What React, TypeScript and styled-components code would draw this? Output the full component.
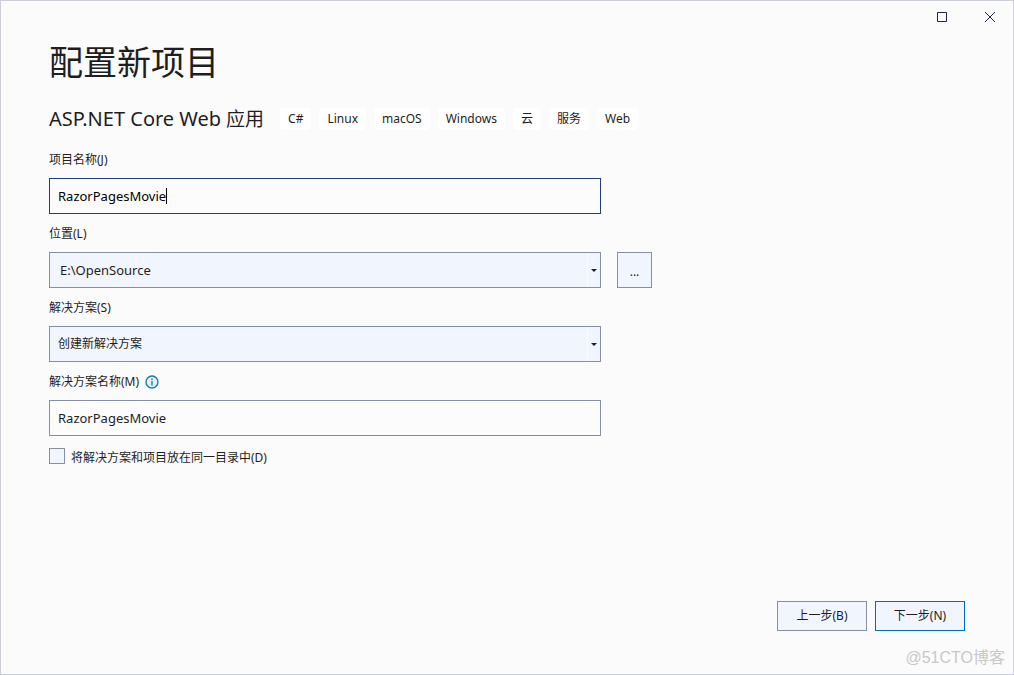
import React from "react";
import styled, { createGlobalStyle } from "styled-components";

const GlobalStyle = createGlobalStyle`
  *, *::before, *::after { box-sizing: border-box; }
  body {
    margin: 0;
    background: #fbfbfb;
    color: #1e1e1e;
    font: 12px/16px "Noto Sans", "Noto Sans CJK SC", sans-serif;
  }
`;

const Window = styled.div`
  position: relative;
  display: flex;
  flex-direction: column;
  min-height: 100vh;
  outline: 1px solid #cccedb;
  outline-offset: -1px;
`;

const TitleBar = styled.header`
  display: flex;
  justify-content: flex-end;
  padding-top: 1px;
`;

const CaptionButton = styled.button`
  display: flex;
  align-items: center;
  justify-content: center;
  width: 48px;
  height: 32px;
  padding: 0;
  border: 0;
  background: transparent;
  color: #1b293e;
`;

const Content = styled.main`
  flex: 1;
  padding: 4px 49px 0;
`;

const Title = styled.h1`
  margin: 0;
  font-size: 34px;
  font-weight: 400;
  line-height: 50px;
`;

const Template = styled.div`
  display: flex;
  align-items: center;
  flex-wrap: wrap;
  gap: 16px;
  margin-top: 16px;
`;

const TemplateName = styled.h2`
  margin: 0;
  font-size: 19px;
  font-weight: 400;
  line-height: 32px;
`;

const Latin = styled.span`
  font-size: 20px;
`;

const Tags = styled.ul`
  display: flex;
  flex-wrap: wrap;
  gap: 8px;
  margin: 0;
  padding: 0;
  list-style: none;
`;

const Tag = styled.li`
  padding: 3px 8px;
  border-radius: 4px;
  background: #ffffff;
`;

const Form = styled.form`
  display: flex;
  flex-direction: column;
  gap: 12px;
  margin-top: 17px;
`;

const Field = styled.div`
  display: flex;
  flex-direction: column;
  gap: 10px;
`;

const LabelRow = styled.div`
  display: flex;
  align-items: center;
  gap: 6px;
`;

const FieldRow = styled.div`
  display: flex;
  gap: 16px;
`;

const Control = styled.div`
  position: relative;
  flex: 0 1 552px;
  min-width: 0;
`;

const TextInput = styled.input<{ $active?: boolean }>`
  display: block;
  width: 100%;
  height: 36px;
  padding: 0 8px;
  border: 1px solid ${(p) => (p.$active ? "#1f3d7a" : "#868fa6")};
  border-radius: 0;
  outline: 0;
  background: #fcfcfc;
  color: ${(p) => (p.$active ? "#000000" : "#1e1e1e")};
  font: inherit;
  font-size: 13px;
`;

const Caret = styled.span`
  position: absolute;
  top: 10px;
  left: 9px;
  border-right: 1px solid #000000;
  color: transparent;
  font-size: 13px;
  pointer-events: none;
`;

const Select = styled.select<{ $latin?: boolean }>`
  display: block;
  appearance: none;
  width: 100%;
  height: 36px;
  padding: 0 24px 0 ${(p) => (p.$latin ? "10px" : "8px")};
  border: 1px solid #868fa6;
  border-radius: 0;
  background: #f1f5fe;
  color: #1e1e1e;
  font: inherit;
  font-size: ${(p) => (p.$latin ? "13px" : "12px")};
`;

const DropMark = styled.span`
  position: absolute;
  top: 1px;
  right: 1px;
  bottom: 1px;
  display: flex;
  align-items: center;
  justify-content: center;
  width: 13px;
  border-left: 1px solid #fcfcfc;
  pointer-events: none;
`;

const Button = styled.button<{ $primary?: boolean }>`
  width: 90px;
  height: 30px;
  padding: 0;
  border: 1px solid ${(p) => (p.$primary ? "#006cbe" : "#868fa6")};
  border-radius: 0;
  background: #f1f5fe;
  color: #1e1e1e;
  font: inherit;
`;

const BrowseButton = styled(Button)`
  width: 35px;
  height: 36px;
  padding-top: 4px;
`;

const CheckRow = styled.label`
  display: flex;
  align-items: flex-start;
  align-self: flex-start;
  gap: 6px;
  line-height: 20px;
`;

const CheckBox = styled.input`
  appearance: none;
  width: 16px;
  height: 16px;
  margin: 0;
  border: 1px solid #868fa6;
  background: #f1f5fe;
`;

const Footer = styled.footer`
  display: flex;
  justify-content: flex-end;
  gap: 8px;
  padding: 16px 49px 44px;
`;

const Watermark = styled.div`
  position: absolute;
  right: 9px;
  bottom: 6px;
  color: #c8c8c8;
  font: 16px/22px "Liberation Sans", "Noto Sans CJK SC", sans-serif;
`;

const tags = ["C#", "Linux", "macOS", "Windows", "云", "服务", "Web"];

const Arrow = () => (
  <DropMark>
    <svg width="6" height="3" viewBox="0 0 6 3" aria-hidden="true">
      <path d="M0 0h6L3 3z" fill="#1e1e1e" />
    </svg>
  </DropMark>
);

export default function App() {
  return (
    <Window>
      <GlobalStyle />
      <TitleBar>
        <CaptionButton type="button" aria-label="最大化">
          <svg width="10" height="10" viewBox="0 0 10 10" fill="none" stroke="currentColor">
            <path d="M.5.5h9v9h-9z" />
          </svg>
        </CaptionButton>
        <CaptionButton type="button" aria-label="关闭">
          <svg width="10" height="10" viewBox="0 0 10 10" fill="none" stroke="currentColor">
            <path d="M0 0l10 10M10 0L0 10" />
          </svg>
        </CaptionButton>
      </TitleBar>
      <Content>
        <Title>配置新项目</Title>
        <Template>
          <TemplateName>
            <Latin>ASP.NET Core Web</Latin> 应用
          </TemplateName>
          <Tags>
            {tags.map((tag) => (
              <Tag key={tag}>{tag}</Tag>
            ))}
          </Tags>
        </Template>
        <Form id="project" onSubmit={(e) => e.preventDefault()}>
          <Field>
            <LabelRow>
              <label htmlFor="name">项目名称(J)</label>
            </LabelRow>
            <FieldRow>
              <Control>
                <TextInput id="name" $active defaultValue="RazorPagesMovie" />
                <Caret aria-hidden="true">RazorPagesMovie</Caret>
              </Control>
            </FieldRow>
          </Field>
          <Field>
            <LabelRow>
              <label htmlFor="location">位置(L)</label>
            </LabelRow>
            <FieldRow>
              <Control>
                <Select id="location" $latin>
                  <option>E:\OpenSource</option>
                </Select>
                <Arrow />
              </Control>
              <BrowseButton type="button" aria-label="浏览">...</BrowseButton>
            </FieldRow>
          </Field>
          <Field>
            <LabelRow>
              <label htmlFor="solution">解决方案(S)</label>
            </LabelRow>
            <FieldRow>
              <Control>
                <Select id="solution">
                  <option>创建新解决方案</option>
                </Select>
                <Arrow />
              </Control>
            </FieldRow>
          </Field>
          <Field>
            <LabelRow>
              <label htmlFor="solution-name">解决方案名称(M)</label>
              <svg width="14" height="14" viewBox="0 0 14 14" aria-hidden="true">
                <circle cx="7" cy="7" r="6" fill="#e3f0f5" stroke="#0f7fa8" strokeWidth="1.4" />
                <path d="M7 6v4.5M7 3.5V5" stroke="#0f7fa8" strokeWidth="1.4" />
              </svg>
            </LabelRow>
            <FieldRow>
              <Control>
                <TextInput id="solution-name" defaultValue="RazorPagesMovie" />
              </Control>
            </FieldRow>
          </Field>
          <CheckRow>
            <CheckBox type="checkbox" />
            将解决方案和项目放在同一目录中(D)
          </CheckRow>
        </Form>
      </Content>
      <Footer>
        <Button type="button">上一步(B)</Button>
        <Button type="submit" form="project" $primary>
          下一步(N)
        </Button>
      </Footer>
      <Watermark>@51CTO博客</Watermark>
    </Window>
  );
}
